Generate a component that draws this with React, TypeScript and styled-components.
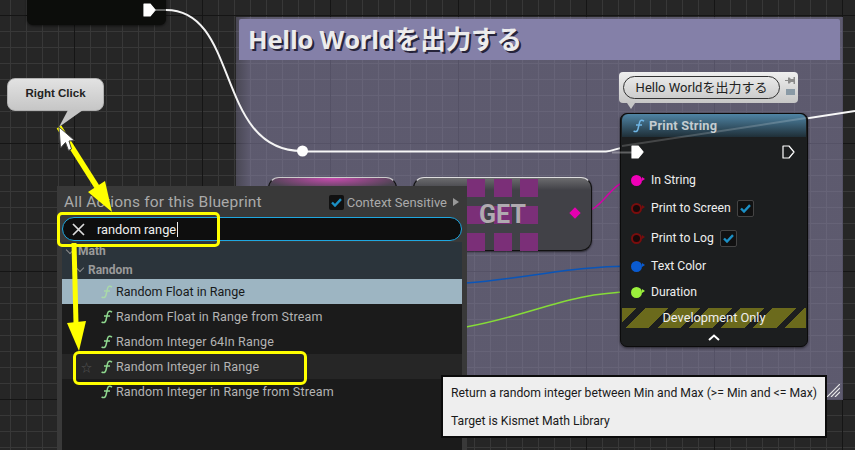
import styled, { createGlobalStyle } from "styled-components";

const GlobalStyle = createGlobalStyle`
  html, body {
    margin: 0;
    padding: 0;
    background: #262626;
  }
`;

const pinRows = [
  { label: "In String", color: "#f000b8", hollow: false, checked: false, height: 26 },
  { label: "Print to Screen", color: "#7a0d0d", hollow: true, checked: true, height: 30 },
  { label: "Print to Log", color: "#7a0d0d", hollow: true, checked: true, height: 30 },
  { label: "Text Color", color: "#0a5bd0", hollow: false, checked: false, height: 26 },
  { label: "Duration", color: "#9bf03c", hollow: false, checked: false, height: 26 },
];

const results = [
  { label: "Random Float in Range", selected: true },
  { label: "Random Float in Range from Stream" },
  { label: "Random Integer 64In Range" },
  { label: "Random Integer in Range", hovered: true },
  { label: "Random Integer in Range from Stream" },
];

const FnIcon = ({ color, size = 14 }: { color: string; size?: number }) => (
  <svg width={size} height={size} viewBox="0 0 14 14" fill="none" stroke={color} strokeWidth="1.500">
    <path d="M12 2.200C10 .4 8.100 1.200 7.500 3.600L6 10C5.400 12.500 3.600 13.400 1.600 11.800" />
    <path d="M4 6H10" />
  </svg>
);

const ExecPin = ({ filled }: { filled: boolean }) => (
  <svg width="13" height="14" viewBox="0 0 13 14">
    <path
      d="M1 1H7L12 7L7 13H1Z"
      fill={filled ? "#fff" : "none"}
      stroke="#fff"
      strokeWidth="1.200"
      strokeLinejoin="round"
    />
  </svg>
);

const Check = () => (
  <svg width="11" height="9" viewBox="0 0 11 9" fill="none" stroke="#1b8fc4" strokeWidth="2.400">
    <path d="M1 4.500L4 7.500L10 1.200" />
  </svg>
);

export default function App() {
  return (
    <Canvas>
      <GlobalStyle />

      <EventNode>
        <ExecPin filled />
      </EventNode>

      <CommentBox>
        <CommentHeader>Hello Worldを出力する</CommentHeader>
        <ResizeGrip width="13" height="13" viewBox="0 0 13 13" stroke="#e8e8e8" strokeWidth="1.200">
          <path d="M0 13L13 0M4 13L13 4M8 13L13 8" />
        </ResizeGrip>
      </CommentBox>

      <Wires viewBox="0 0 855 450" fill="none">
        <path d="M155 10H166" stroke="#fff" strokeOpacity="0.35" strokeWidth="2" />
        <path d="M166 10C240 10 215 151 302 151" stroke="#f4f4f4" strokeWidth="2" />
        <path d="M302 151.500H606C614 151 618 147 640 144L855 111" stroke="#f8f8f8" strokeWidth="2" />
        <path d="M578 213C605 213 608 180 634 180" stroke="#d400a8" strokeWidth="1.500" />
        <path d="M466 283C530 278 570 266 632 266" stroke="#0a55b8" strokeWidth="1.500" />
        <path d="M466 327C530 316 570 292 632 292" stroke="#86dc38" strokeWidth="1.500" />
        <circle cx="302.500" cy="151" r="5.500" fill="#fff" />
      </Wires>

      <PureNode />

      <GetNode>
        <GetPattern>
          {Array.from({ length: 9 }).map((_, i) => (
            <GetSquare key={i} />
          ))}
        </GetPattern>
        <GetLabel>GET</GetLabel>
        <GetPin />
      </GetNode>

      <CommentBubble>
        <BubblePill>Hello Worldを出力する</BubblePill>
        <BubbleIcons>
          <svg width="10" height="7" viewBox="0 0 10 7" fill="#8b8b8b">
            <path d="M0 3H3V.5H4.500L6 2H8.500V0H10V7H8.500V5H6L4.500 6.500H3V4H0Z" />
          </svg>
          <BubbleMini />
        </BubbleIcons>
      </CommentBubble>

      <PrintNode>
        <PrintHeader>
          <FnIcon color="#6fb6e6" />
          Print String
        </PrintHeader>
        <ExecRow>
          <ExecPin filled />
          <ExecPin filled={false} />
        </ExecRow>
        {pinRows.map((row) => (
          <PinRow key={row.label} $height={row.height}>
            <Pin $color={row.color} $hollow={row.hollow} />
            <PinLabel>{row.label}</PinLabel>
            {row.checked && (
              <PinCheck>
                <Check />
              </PinCheck>
            )}
          </PinRow>
        ))}
        <DevBand>Development Only</DevBand>
        <Collapse>
          <svg width="12" height="7" viewBox="0 0 12 7" fill="none" stroke="#fff" strokeWidth="2">
            <path d="M1 6L6 1.500L11 6" />
          </svg>
        </Collapse>
      </PrintNode>

      <WireOverlay viewBox="0 0 855 450" fill="none">
        <path d="M622 146L806 118" stroke="#fff" strokeOpacity="0.18" strokeWidth="2" />
        <path d="M612 152.500H632" stroke="#fff" strokeOpacity="0.3" strokeWidth="2" />
      </WireOverlay>

      <ActionMenu>
        <MenuHead>
          <MenuTitle>All Actions for this Blueprint</MenuTitle>
          <ContextToggle>
            <MenuCheck>
              <Check />
            </MenuCheck>
            Context Sensitive
            <Caret />
          </ContextToggle>
        </MenuHead>
        <SearchField>
          <svg width="13" height="13" viewBox="0 0 13 13" fill="none" stroke="#ddd" strokeWidth="1.700">
            <path d="M1 1L12 12M12 1L1 12" />
          </svg>
          <SearchText>random range</SearchText>
        </SearchField>
        <ResultList>
          <CategoryRow $indent={5}>
            <Chevron />
            Math
          </CategoryRow>
          <CategoryRow $indent={15}>
            <Chevron />
            Random
          </CategoryRow>
          {results.map((item) => (
            <ResultRow key={item.label} $selected={item.selected} $hovered={item.hovered}>
              {item.hovered && <StarMark>☆</StarMark>}
              <FnSlot>
                <FnIcon color={item.selected ? "#a9d9a9" : "#8fd88f"} />
              </FnSlot>
              {item.label}
            </ResultRow>
          ))}
        </ResultList>
      </ActionMenu>

      <Tooltip>
        <TooltipLine>Return a random integer between Min and Max (&gt;= Min and &lt;= Max)</TooltipLine>
        <TooltipLine>Target is Kismet Math Library</TooltipLine>
      </Tooltip>

      <Callout>Right Click</Callout>
      <CalloutTail viewBox="0 0 30 20">
        <path d="M10 0L1 17L25 0Z" fill="#c4c4c4" />
      </CalloutTail>

      <Annotations viewBox="0 0 855 450">
        <path d="M59 127L97 187" stroke="#ffff00" strokeWidth="5.500" />
        <path d="M112 212L88 192L105 181Z" fill="#ffff00" />
        <path d="M74 243L76 323" stroke="#ffff00" strokeWidth="5" />
        <path d="M79 351L67 323L86 321Z" fill="#ffff00" />
        <path
          d="M59 127L60.500 148L65.500 142.500L68.500 150.500L71.500 149L69 141L74.500 140.500Z"
          fill="#fff"
          stroke="#444"
          strokeWidth="1"
          strokeLinejoin="round"
        />
      </Annotations>

      <SearchMark />
      <RowMark />
    </Canvas>
  );
}

const Canvas = styled.div`
  position: relative;
  width: 855px;
  height: 450px;
  overflow: hidden;
  font-family: Roboto, "Noto Sans CJK JP", sans-serif;
  background-color: #262626;
  background-image:
    linear-gradient(#151515 1px, transparent 1px),
    linear-gradient(90deg, #151515 1px, transparent 1px),
    linear-gradient(#383838 1px, transparent 1px),
    linear-gradient(90deg, #383838 1px, transparent 1px);
  background-size: 128px 128px, 128px 128px, 16px 16px, 16px 16px;
  background-position: 0 15px, 74px 0, 0 15px, 10px 0;
`;

const EventNode = styled.div`
  position: absolute;
  left: 27px;
  top: -30px;
  width: 139px;
  height: 55px;
  box-sizing: border-box;
  padding: 33px 10px 0 0;
  display: flex;
  justify-content: flex-end;
  align-items: flex-start;
  background: #0c0d0b;
  border-radius: 6px;
  box-shadow: 0 1px 3px rgba(0, 0, 0, 0.6);
`;

const CommentBox = styled.div`
  position: absolute;
  left: 236px;
  top: 17px;
  width: 607px;
  height: 383px;
  box-sizing: border-box;
  padding: 2px 3px;
  background: linear-gradient(90deg, rgba(148, 142, 182, 0.32), rgba(148, 142, 182, 0.5) 14px);
`;

const CommentHeader = styled.div`
  height: 41px;
  box-sizing: border-box;
  padding-left: 9px;
  background: #8480a8;
  border-radius: 2px 2px 0 0;
  font-family: "Open Sans", "Noto Sans CJK JP", sans-serif;
  font-size: 25.600px;
  font-weight: 700;
  line-height: 41px;
  letter-spacing: -0.2px;
  color: #ececec;
  text-shadow: 2px 2px 0 #26243a;
`;

const ResizeGrip = styled.svg`
  position: absolute;
  right: 3px;
  bottom: 3px;
`;

const Wires = styled.svg`
  position: absolute;
  inset: 0;
  width: 855px;
  height: 450px;
`;

const WireOverlay = styled(Wires)``;

const Annotations = styled(Wires)``;

const PureNode = styled.div`
  position: absolute;
  left: 268px;
  top: 177px;
  width: 129px;
  height: 74px;
  box-sizing: border-box;
  background: radial-gradient(ellipse 70px 12px at 50% 0, #c94bb0, #4a4450);
  border: 1px solid #111;
  border-top-color: #ccc;
  border-radius: 11px;
`;

const GetNode = styled.div`
  position: absolute;
  left: 413px;
  top: 177px;
  width: 179px;
  height: 74px;
  box-sizing: border-box;
  display: flex;
  align-items: center;
  justify-content: center;
  background: linear-gradient(#6b6b6e, #414147 12px);
  border: 1px solid #111;
  border-top-color: #ddd;
  border-radius: 11px;
  box-shadow: 0 1px 2px rgba(0, 0, 0, 0.6);
`;

const GetPattern = styled.div`
  position: absolute;
  left: 53px;
  top: 1px;
  display: grid;
  grid-template-columns: repeat(3, 18px);
  grid-template-rows: repeat(3, 18px);
  gap: 9px 8.500px;
`;

const GetSquare = styled.div`
  background: #7b2f78;
`;

const GetLabel = styled.div`
  position: relative;
  font-family: Roboto, sans-serif;
  font-size: 25px;
  font-weight: 700;
  color: #b0aab0;
`;

const GetPin = styled.div`
  position: absolute;
  left: 157px;
  top: 31px;
  width: 8px;
  height: 8px;
  background: #e400b0;
  transform: rotate(45deg);
`;

const CommentBubble = styled.div`
  position: absolute;
  left: 619px;
  top: 72px;
  width: 179px;
  height: 31px;
  box-sizing: border-box;
  padding: 4px 3px 4px 4px;
  display: flex;
  gap: 5px;
  background: linear-gradient(#efefef, #c6c6c6);
  border-radius: 4px;
  &::after {
    content: "";
    position: absolute;
    left: 8px;
    top: 100%;
    border: 4px solid transparent;
    border-top: 6px solid #c6c6c6;
  }
`;

const BubblePill = styled.div`
  width: 157px;
  height: 23px;
  box-sizing: border-box;
  border: 1px solid #333;
  border-radius: 12px;
  text-align: center;
  font-size: 13px;
  line-height: 21px;
  color: #222;
`;

const BubbleIcons = styled.div`
  display: flex;
  flex-direction: column;
  align-items: center;
  gap: 5px;
  padding-top: 1px;
`;

const BubbleMini = styled.div`
  width: 9px;
  height: 6px;
  background: #8a9aa6;
`;

const PrintNode = styled.div`
  position: absolute;
  left: 620px;
  top: 113px;
  width: 188px;
  height: 234px;
  box-sizing: border-box;
  padding: 0 1px;
  display: flex;
  flex-direction: column;
  background: #1c1e1f;
  border: 1px solid #0b0b0b;
  border-radius: 7px;
  box-shadow: 0 1px 3px rgba(0, 0, 0, 0.6);
  color: #eee;
  font-size: 12.200px;
`;

const PrintHeader = styled.div`
  height: 23px;
  flex: none;
  display: flex;
  align-items: center;
  gap: 3px;
  padding-left: 10px;
  background: linear-gradient(#4f84a4, #1f2f38);
  border-radius: 6px 6px 0 0;
  font-size: 12.800px;
  font-weight: 700;
  letter-spacing: 0.2px;
  color: #c4ccd0;
`;

const ExecRow = styled.div`
  height: 30px;
  flex: none;
  display: flex;
  align-items: center;
  justify-content: space-between;
  padding: 0 11px 0 9px;
`;

const PinRow = styled.div<{ $height: number }>`
  height: ${(p) => p.$height}px;
  flex: none;
  display: flex;
  align-items: center;
  padding-left: 9px;
`;

const Pin = styled.div<{ $color: string; $hollow: boolean }>`
  position: relative;
  width: 11px;
  height: 11px;
  box-sizing: border-box;
  border-radius: 50%;
  background: ${(p) => (p.$hollow ? "#180a0a" : p.$color)};
  border: 2px solid ${(p) => p.$color};
  &::after {
    content: "";
    position: absolute;
    left: 9px;
    top: 0.500px;
    border: 2.500px solid transparent;
    border-left: 3px solid ${(p) => p.$color};
  }
`;

const PinLabel = styled.span`
  margin-left: 9px;
`;

const PinCheck = styled.div`
  width: 17px;
  height: 17px;
  margin-left: 6px;
  box-sizing: border-box;
  display: flex;
  align-items: center;
  justify-content: center;
  background: #111;
  border: 1px solid #444;
  border-radius: 2px;
`;

const DevBand = styled.div`
  height: 20px;
  flex: none;
  margin-top: 3px;
  text-align: center;
  line-height: 20px;
  font-size: 12.800px;
  background: repeating-linear-gradient(
    135deg,
    #6b6a1c 0,
    #6b6a1c 10.600px,
    #1c1e1f 10.600px,
    #1c1e1f 16.300px,
    #6b6a1c 16.300px,
    #6b6a1c 22.600px
  );
`;

const Collapse = styled.div`
  flex: 1;
  display: flex;
  align-items: center;
  justify-content: center;
`;

const ActionMenu = styled.div`
  position: absolute;
  left: 57px;
  top: 186px;
  width: 410px;
  height: 280px;
  box-sizing: border-box;
  padding: 0 5px;
  display: flex;
  flex-direction: column;
  background: #393939;
  color: #aaa;
`;

const MenuHead = styled.div`
  height: 31px;
  flex: none;
  box-sizing: border-box;
  display: flex;
  align-items: center;
  justify-content: space-between;
  padding: 1px 3px 0 2px;
`;

const MenuTitle = styled.div`
  font-size: 15.500px;
  letter-spacing: 0.2px;
`;

const ContextToggle = styled.div`
  display: flex;
  align-items: center;
  gap: 3px;
  font-size: 13px;
`;

const MenuCheck = styled.div`
  width: 15px;
  height: 15px;
  display: flex;
  align-items: center;
  justify-content: center;
  background: #111;
  border-radius: 2px;
`;

const Caret = styled.div`
  margin-left: 3px;
  border: 4px solid transparent;
  border-left: 6px solid #999;
  border-right: 0;
`;

const SearchField = styled.div`
  height: 24px;
  flex: none;
  box-sizing: border-box;
  display: flex;
  align-items: center;
  gap: 12px;
  padding-left: 9px;
  background: #0e0e0e;
  border: 1px solid #1fa7e0;
  border-radius: 12px;
`;

const SearchText = styled.span`
  padding-right: 1px;
  border-right: 1px solid #eee;
  font-size: 12.800px;
  line-height: 15px;
  color: #eee;
`;

const ResultList = styled.div`
  flex: 1;
  background: #1b1b1b;
  margin-top: 1px;
`;

const CategoryRow = styled.div<{ $indent: number }>`
  height: 18.500px;
  display: flex;
  align-items: center;
  gap: 5px;
  padding-left: ${(p) => p.$indent}px;
  background: #2b343b;
  font-size: 12px;
  font-weight: 700;
  color: #9a9a9a;
`;

const Chevron = styled.div`
  width: 6px;
  height: 6px;
  margin-top: -3px;
  border-right: 1.500px solid #8c8c8c;
  border-bottom: 1.500px solid #8c8c8c;
  box-sizing: border-box;
  transform: rotate(45deg);
`;

const ResultRow = styled.div<{ $selected?: boolean; $hovered?: boolean }>`
  position: relative;
  height: 25px;
  box-sizing: border-box;
  display: flex;
  align-items: center;
  padding-left: 38px;
  font-size: 12.500px;
  letter-spacing: ${(p) => (p.$selected ? "0" : "0.15px")};
  background: ${(p) => (p.$selected ? "#9db5c2" : p.$hovered ? "#262626" : "#1b1b1b")};
  color: ${(p) => (p.$selected ? "#17191a" : "#b4b4b4")};
`;

const FnSlot = styled.span`
  display: flex;
  width: 16px;
`;

const StarMark = styled.span`
  position: absolute;
  left: 19px;
  font-size: 11px;
  color: #555;
`;

const Tooltip = styled.div`
  position: absolute;
  left: 441px;
  top: 375px;
  width: 386px;
  height: 63px;
  box-sizing: border-box;
  padding: 7px 8px;
  display: flex;
  flex-direction: column;
  gap: 10px;
  background: #eeeeee;
  border: 2px solid #0b0b0b;
  color: #1a1a1a;
  font-size: 12.200px;
`;

const TooltipLine = styled.div`
  line-height: 18px;
  white-space: nowrap;
`;

const Callout = styled.div`
  position: absolute;
  left: 7px;
  top: 78px;
  width: 97px;
  height: 33px;
  box-sizing: border-box;
  padding-top: 8px;
  text-align: center;
  background: linear-gradient(#e2e2e2, #c6c6c6);
  border: 1px solid #b0b0b0;
  border-radius: 8px;
  font-family: "Liberation Sans", sans-serif;
  font-size: 11.500px;
  font-weight: 700;
  color: #222;
`;

const CalloutTail = styled.svg`
  position: absolute;
  left: 58px;
  top: 110px;
  width: 30px;
  height: 20px;
`;

const SearchMark = styled.div`
  position: absolute;
  left: 57px;
  top: 212px;
  width: 163px;
  height: 35px;
  box-sizing: border-box;
  border: 3px solid #ffff00;
  border-radius: 5px;
`;

const RowMark = styled.div`
  position: absolute;
  left: 73px;
  top: 351px;
  width: 234px;
  height: 34px;
  box-sizing: border-box;
  border: 3px solid #ffff00;
  border-radius: 6px;
`;
